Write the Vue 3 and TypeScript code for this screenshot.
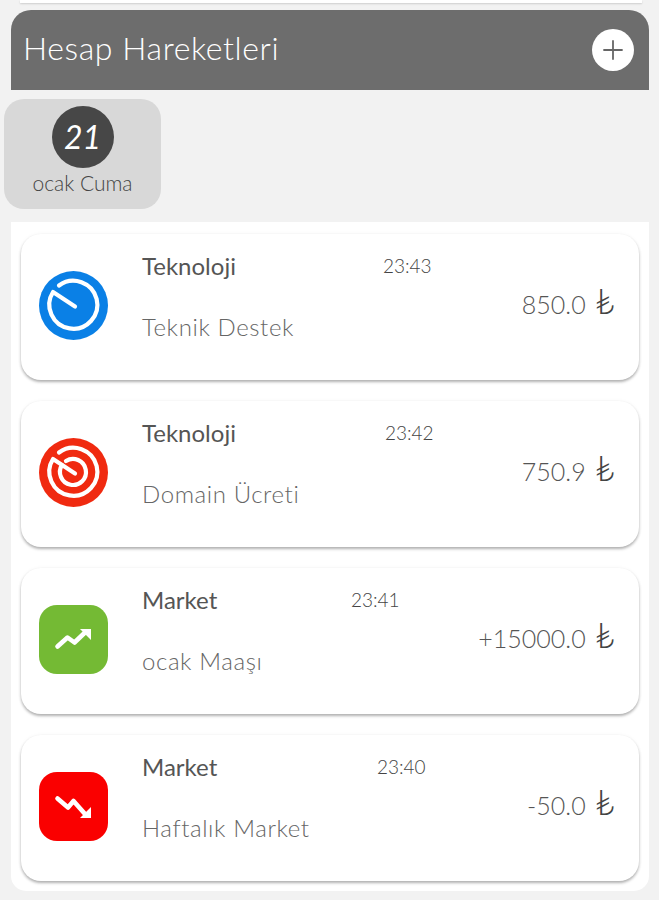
<script setup lang="ts">
interface Movement {
  id: number
  category: string
  time: string
  timeLeft: number
  note: string
  amount: string
  icon: 'clock' | 'target' | 'up' | 'down'
}

const movements: Movement[] = [
  { id: 1, category: 'Teknoloji', time: '23:43', timeLeft: 241, note: 'Teknik Destek', amount: '850.0', icon: 'clock' },
  { id: 2, category: 'Teknoloji', time: '23:42', timeLeft: 243, note: 'Domain Ücreti', amount: '750.9', icon: 'target' },
  { id: 3, category: 'Market', time: '23:41', timeLeft: 209, note: 'ocak Maaşı', amount: '+15000.0', icon: 'up' },
  { id: 4, category: 'Market', time: '23:40', timeLeft: 235, note: 'Haftalık Market', amount: '-50.0', icon: 'down' },
]
</script>

<template>
  <div class="page">
    <div class="prev-card"></div>

    <header class="header">
      <h1>Hesap Hareketleri</h1>
      <button class="add-btn" aria-label="Ekle">
        <svg width="24" height="24" viewBox="0 0 24 24">
          <path d="M12 3v18M3 12h18" stroke="#666" stroke-width="1.8" stroke-linecap="round" />
        </svg>
      </button>
    </header>

    <div class="date-chip">
      <div class="day">21</div>
      <div class="month">ocak Cuma</div>
    </div>

    <section class="list">
      <article v-for="item in movements" :key="item.id" class="card">
        <svg class="icon" width="69" height="69" viewBox="0 0 69 69">
          <template v-if="item.icon === 'clock'">
            <circle cx="34.5" cy="34.5" r="34.5" fill="#0a80e6" />
            <path d="M20 14.5A24 24 0 1 1 14 21L36 35.5" fill="none" stroke="#fff" stroke-width="4.2" stroke-linecap="round" stroke-linejoin="round" />
          </template>
          <template v-else-if="item.icon === 'target'">
            <circle cx="34.5" cy="34.5" r="34.5" fill="#f02a10" />
            <path d="M20 14.5A24 24 0 1 1 14 21L36 35.5" fill="none" stroke="#fff" stroke-width="4.2" stroke-linecap="round" stroke-linejoin="round" />
            <path d="M27 23A13 13 0 1 1 23 27" fill="none" stroke="#fff" stroke-width="4.2" stroke-linecap="round" />
          </template>
          <template v-else-if="item.icon === 'up'">
            <rect width="69" height="69" rx="18" fill="#74ba34" />
            <path d="M18.5 41.5L28.5 32.5L35.5 37.5L46 27.5" fill="none" stroke="#fff" stroke-width="4.6" stroke-linecap="round" stroke-linejoin="round" />
            <path d="M41 24H52V35Z" fill="#fff" />
          </template>
          <template v-else>
            <rect width="69" height="69" rx="18" fill="#fa0000" />
            <path d="M18.5 26.5L29 35.5L34.5 29L46 42" fill="none" stroke="#fff" stroke-width="4.6" stroke-linecap="round" stroke-linejoin="round" />
            <path d="M41 46H52V35Z" fill="#fff" />
          </template>
        </svg>

        <div class="info">
          <div class="top-row">
            <span class="category">{{ item.category }}</span>
            <span class="time" :style="{ left: item.timeLeft + 'px' }">{{ item.time }}</span>
          </div>
          <div class="note">{{ item.note }}</div>
        </div>

        <div class="amount">{{ item.amount }}<span class="currency">₺</span></div>
      </article>
    </section>
  </div>
</template>

<style>
html,
body {
  margin: 0;
  background: #f2f2f2;
}
</style>

<style scoped>
.page {
  width: 659px;
  height: 900px;
  overflow: hidden;
  background: #f2f2f2;
  font-family: "Lato", "Liberation Sans", sans-serif;
  font-weight: 300;
}

.prev-card {
  height: 3px;
  margin: 0 17px 0 20px;
  background: #fff;
  box-shadow: 0 1px 2px rgba(0, 0, 0, 0.15);
}

.header {
  display: flex;
  align-items: center;
  justify-content: space-between;
  box-sizing: border-box;
  height: 80px;
  margin: 7px 10px 0 11px;
  padding: 0 15px 0 12px;
  background: #6d6d6d;
  border-radius: 20px 20px 0 0;
}

h1 {
  margin: 0 0 6px;
  font-size: 32px;
  font-weight: 300;
  letter-spacing: 0.6px;
  color: #fff;
}

.add-btn {
  display: flex;
  align-items: center;
  justify-content: center;
  width: 42px;
  height: 42px;
  padding: 0;
  border: none;
  border-radius: 50%;
  background: #fff;
}

.date-chip {
  display: flex;
  flex-direction: column;
  align-items: center;
  box-sizing: border-box;
  width: 157px;
  height: 110px;
  margin: 9px 0 0 4px;
  padding-top: 7px;
  background: #d8d8d8;
  border-radius: 20px;
}

.day {
  width: 62px;
  height: 62px;
  line-height: 62px;
  text-align: center;
  border-radius: 50%;
  background: #474747;
  color: #fff;
  font-size: 32px;
  font-weight: 400;
  font-style: italic;
}

.month {
  margin-top: 2px;
  font-size: 21px;
  color: #444;
}

.list {
  display: flex;
  flex-direction: column;
  gap: 21px;
  box-sizing: border-box;
  height: 669px;
  margin: 13px 10px 0 11px;
  padding: 12px 10px 0;
  background: #fff;
  border-radius: 0 0 15px 15px;
}

.card {
  display: flex;
  align-items: center;
  box-sizing: border-box;
  height: 146px;
  padding: 0 24px 3px 18px;
  background: #fff;
  border-radius: 20px;
  box-shadow: 0 2px 3px rgba(0, 0, 0, 0.3), 0 0 4px rgba(0, 0, 0, 0.04);
}

.icon {
  flex: none;
}

.info {
  flex: 1;
  margin-left: 34px;
  align-self: flex-start;
  padding-top: 16px;
}

.top-row {
  position: relative;
  height: 32px;
  line-height: 32px;
}

.category {
  font-size: 24px;
  font-weight: 400;
  color: #555;
}

.time {
  position: absolute;
  top: 0;
  font-size: 19px;
  color: #444;
}

.note {
  margin-top: 29px;
  line-height: 32px;
  font-size: 24px;
  letter-spacing: 0.6px;
  color: #666;
}

.amount {
  margin-bottom: 3px;
  font-size: 25px;
  color: #555;
  white-space: nowrap;
}

.currency {
  margin-left: 9px;
  font-size: 35px;
  font-weight: 300;
  line-height: 0;
  color: #444;
}
</style>
